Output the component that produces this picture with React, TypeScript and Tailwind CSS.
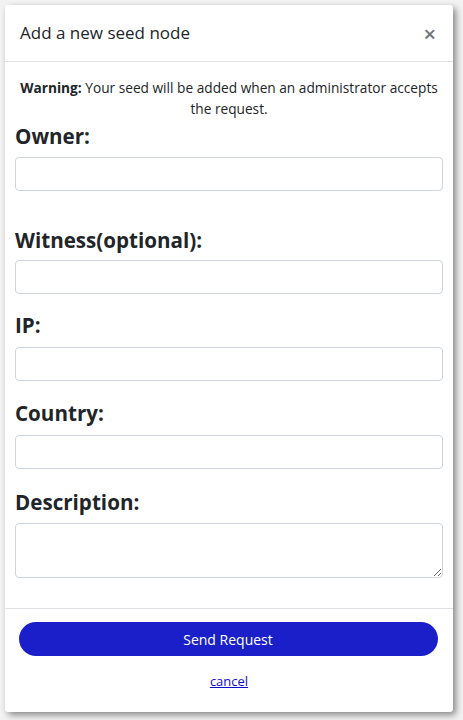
import React from "react";

export default function App() {
  const label = "block text-[20.6px] font-bold leading-[24px] text-[#212529]";
  const input = "block w-full h-[34px] border border-[#ced4da] rounded-[4px] bg-white";
  return (
    <div className="w-[463px] h-[720px] bg-[#f3f3f3] pt-[5px] pl-[5px]" style={{ fontFamily: "'Open Sans', 'Noto Sans', sans-serif" }}>
      <div className="w-[448px] h-[707px] bg-white rounded-[3px] shadow-[3px_3px_7px_rgba(0,0,0,0.45)] flex flex-col">
        <div className="h-[57px] border-b border-[#dee2e6] flex items-center justify-between px-[15px] shrink-0">
          <span className="text-[17px] text-[#212529] leading-[24px] font-medium">Add a new seed node</span>
          <span className="text-[22px] text-[#6c757d] leading-none font-semibold mr-[2px]">×</span>
        </div>
        <div className="px-[10px] pt-[15px] flex-1">
          <p className="text-center text-[13.7px] leading-[21px] text-[#212529]">
            <b>Warning:</b> Your seed will be added when an administrator accepts the request.
          </p>
          <label className={label + " mt-[5px]"}>Owner:</label>
          <input className={input + " mt-[9px]"} />
          <label className={label + " mt-[37px]"}>Witness(optional):</label>
          <input className={input + " mt-[8px]"} />
          <label className={label + " mt-[19px]"}>IP:</label>
          <input className={input + " mt-[10px]"} />
          <label className={label + " mt-[20px]"}>Country:</label>
          <input className={input + " mt-[10px]"} />
          <label className={label + " mt-[21px]"}>Description:</label>
          <textarea className="block w-full h-[55px] mt-[9px] border border-[#ced4da] rounded-[4px] resize-y" />
        </div>
        <div className="border-t border-[#dee2e6] flex flex-col items-center pt-[13px] pb-[22px] shrink-0">
          <button className="w-[419px] h-[34px] rounded-full bg-[#1a1fc9] text-white text-[14px] ml-[-2px]">Send Request</button>
          <a href="#" className="mt-[16px] text-[13px] leading-[18px] text-[#0d0dcc] underline">cancel</a>
        </div>
      </div>
    </div>
  );
}
